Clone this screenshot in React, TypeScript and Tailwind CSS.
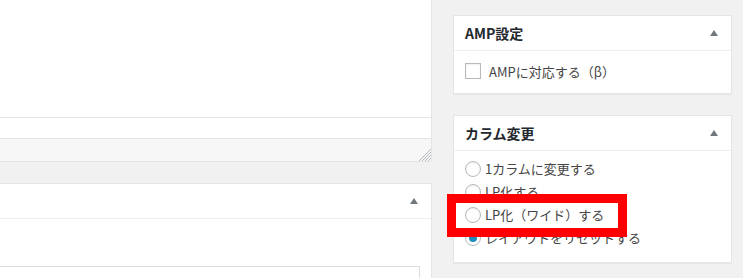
import type { ReactNode } from 'react'

const font = { fontFamily: '"Noto Sans CJK JP", "Noto Sans", sans-serif' }

function Toggle() {
  return (
    <svg width="8" height="6" viewBox="0 0 8 6" className="shrink-0">
      <path d="M4 0 L8 6 L0 6 Z" fill="#72777c" />
    </svg>
  )
}

function ResizeHandle() {
  return (
    <svg width="12" height="12" viewBox="0 0 12 12" className="shrink-0">
      <g stroke="#b4b9be" strokeWidth="1">
        <line x1="0" y1="12" x2="12" y2="0" />
        <line x1="3" y1="12" x2="12" y2="3" />
        <line x1="6" y1="12" x2="12" y2="6" />
        <line x1="9" y1="12" x2="12" y2="9" />
      </g>
    </svg>
  )
}

function Postbox({ title, children }: { title: string; children: ReactNode }) {
  return (
    <div className="border border-[#e5e5e5] bg-white shadow-[0_1px_1px_rgba(0,0,0,0.04)]">
      <div className="flex h-[35px] items-center justify-between border-b border-[#eeeeee] pl-[11px] pr-[13px]">
        <h2 className="text-[14px] font-semibold leading-none text-[#23282d]">{title}</h2>
        <Toggle />
      </div>
      {children}
    </div>
  )
}

function Radio({ label, checked }: { label: string; checked?: boolean }) {
  return (
    <label className="flex h-[23px] items-center gap-[4px]">
      <span className="flex h-4 w-4 shrink-0 items-center justify-center rounded-full border border-[#b4b9be] bg-white shadow-[inset_0_1px_2px_rgba(0,0,0,0.07)]">
        {checked && <span className="h-2 w-2 rounded-full bg-[#1e8cbe]" />}
      </span>
      <span className="text-[13px] leading-none text-[#444]">{label}</span>
    </label>
  )
}

export default function App() {
  return (
    <div style={font} className="relative flex h-[278px] w-[743px] overflow-hidden bg-[#f1f1f1]">
      {/* main column */}
      <div className="flex w-[432px] shrink-0 flex-col">
        <div className="border-r border-b border-[#e5e5e5] bg-white">
          <div className="h-[118px] border-b border-[#e5e5e5]" />
          <div className="h-[21px] border-b border-[#e5e5e5]" />
          <div className="flex h-[22px] items-end justify-end bg-[#f7f7f7]">
            <ResizeHandle />
          </div>
        </div>
        <div className="mt-[21px] flex-1 border border-r border-[#e5e5e5] border-l-0 bg-white">
          <div className="flex h-[35px] items-center justify-end border-b border-[#eeeeee] pr-[13px]">
            <Toggle />
          </div>
          <div className="pr-[11px] pt-[47px]">
            <div className="h-8 border border-l-0 border-[#dddddd] bg-white" />
          </div>
        </div>
      </div>

      {/* sidebar */}
      <div className="ml-[21px] flex w-[279px] shrink-0 flex-col gap-[21px] pt-[15px]">
        <Postbox title="AMP設定">
          <div className="flex items-center gap-[8px] px-[11px] pt-[12px] pb-[14px]">
            <span className="h-4 w-4 shrink-0 border border-[#b4b9be] bg-white shadow-[inset_0_1px_2px_rgba(0,0,0,0.07)]" />
            <span className="text-[13px] leading-none text-[#444]">AMPに対応する（β）</span>
          </div>
        </Postbox>
        <Postbox title="カラム変更">
          <div className="flex flex-col px-[11px] pt-[6px] pb-[13px]">
            <Radio label="1カラムに変更する" />
            <Radio label="LP化する" />
            <Radio label="LP化（ワイド）する" />
            <Radio label="レイアウトをリセットする" checked />
          </div>
        </Postbox>
      </div>

      {/* annotation highlight */}
      <div className="absolute left-[447px] top-[194px] h-[43px] w-[180px] border-[9px] border-[#ff0000]" />
    </div>
  )
}
